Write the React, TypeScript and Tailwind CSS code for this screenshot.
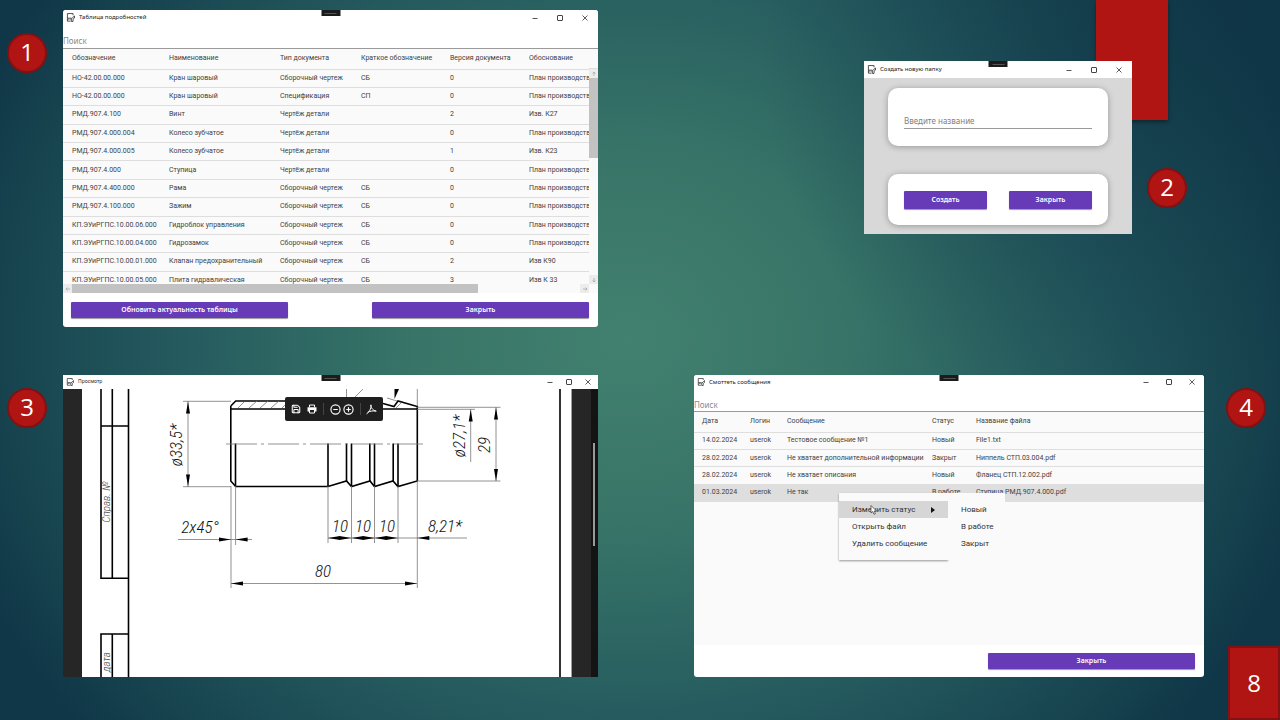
import type { ReactNode } from "react";
import { CircleMinus, CirclePlus, Save } from "lucide-react";

const details: string[][] = [
  ["НО-42.00.00.000", "Кран шаровый", "Сборочный чертеж", "СБ", "0", "План производств"],
  ["НО-42.00.00.000", "Кран шаровый", "Спецификация", "СП", "0", "План производств"],
  ["РМД.907.4.100", "Винт", "Чертёж детали", "", "2", "Изв. К27"],
  ["РМД.907.4.000.004", "Колесо зубчатое", "Чертёж детали", "", "0", "План производств"],
  ["РМД.907.4.000.005", "Колесо зубчатое", "Чертёж детали", "", "1", "Изв. К23"],
  ["РМД.907.4.000", "Ступица", "Чертёж детали", "", "0", "План производств"],
  ["РМД.907.4.400.000", "Рама", "Сборочный чертеж", "СБ", "0", "План производств"],
  ["РМД.907.4.100.000", "Зажим", "Сборочный чертеж", "СБ", "0", "План производств"],
  ["КП.ЭУиРГПС.10.00.06.000", "Гидроблок управления", "Сборочный чертеж", "СБ", "0", "План производств"],
  ["КП.ЭУиРГПС.10.00.04.000", "Гидрозамок", "Сборочный чертеж", "СБ", "0", "План производств"],
  ["КП.ЭУиРГПС.10.00.01.000", "Клапан предохранительный", "Сборочный чертеж", "СБ", "2", "Изв К90"],
  ["КП.ЭУиРГПС.10.00.05.000", "Плита гидравлическая", "Сборочный чертеж", "СБ", "3", "Изв К 33"],
];

const messages: string[][] = [
  ["14.02.2024", "userok", "Тестовое сообщение №1", "Новый", "File1.txt"],
  ["28.02.2024", "userok", "Не хватает дополнительной информации", "Закрыт", "Ниппель СТП.03.004.pdf"],
  ["28.02.2024", "userok", "Не хватает описания", "Новый", "Фланец СТП.12.002.pdf"],
  ["01.03.2024", "userok", "Не так", "В работе", "Ступица РМД.907.4.000.pdf"],
];

function AppIcon({ size }: { size: string }) {
  return (
    <svg className={`shrink-0 ${size}`} viewBox="0 0 16 16" fill="none" stroke="#333" strokeWidth="1.500" aria-hidden="true">
      <path d="M12.500 4V1H2.500v13.500H8" />
      <path d="M2.500 9H9M2.500 12H4M5 9v3M7.500 9v3" strokeWidth="1.200" />
      <path d="M9.500 15V9.500l2.500-1 3-3.500v4l-2.500 2V15z" />
    </svg>
  );
}

function TitleBar({ title, height, control, icon = "size-[9px]" }: { title: string; height: string; control: string; icon?: string }) {
  return (
    <header className={`relative flex items-center bg-white pr-px pl-[3px] ${height}`}>
      <AppIcon size={icon} />
      <h2 className="flex-1 pl-1 text-[#222]">{title}</h2>
      <span className="absolute top-0 left-1/2 flex h-1.5 w-[19px] -translate-x-1/2 items-center justify-center bg-[#1b1b1b]">
        <span className="h-px w-3 bg-[#555]" />
      </span>
      <button aria-label="Свернуть" className={`flex h-full items-center justify-center ${control}`}>
        <svg className="size-1.5" viewBox="0 0 6 6" stroke="#555"><path d="M.5 3.500h5" /></svg>
      </button>
      <button aria-label="Развернуть" className={`flex h-full items-center justify-center ${control}`}>
        <svg className="size-1.5" viewBox="0 0 6 6" fill="none" stroke="#444"><rect x=".5" y=".5" width="5" height="5" rx=".5" /></svg>
      </button>
      <button aria-label="Закрыть окно" className={`flex h-full items-center justify-center ${control}`}>
        <svg className="size-1.5" viewBox="0 0 6 6" stroke="#333" strokeWidth=".8"><path d="M.5.5l5 5M5.500.5l-5 5" /></svg>
      </button>
    </header>
  );
}

function Badge({ children, offset }: { children: ReactNode; offset: string }) {
  return (
    <span className={`flex size-10 shrink-0 items-center justify-center rounded-full border-2 border-[#821114] bg-[#b01513] pb-0.5 font-['Open_Sans'] text-2xl leading-none text-white ${offset}`}>
      {children}
    </span>
  );
}

function Action({ children, className = "" }: { children: ReactNode; className?: string }) {
  return (
    <button className={`rounded-[1px] bg-[#673ab7] text-center text-[7px] font-semibold text-white shadow-[0_1px_1px_rgba(0,0,0,0.4)] ${className}`}>
      {children}
    </button>
  );
}

function Arrow({ d }: { d: string }) {
  return (
    <span className="flex size-[9px] items-center justify-center bg-[#ececec]">
      <svg className="size-1.5" viewBox="0 0 6 6" fill="none" stroke="#a8a8a8" strokeWidth=".8"><path d={d} /></svg>
    </span>
  );
}

function DetailsWindow() {
  return (
    <section className="min-w-0 flex-1 overflow-hidden rounded-[3px] bg-white">
      <TitleBar title="Таблица подробностей" height="h-[15px] text-[6px]" control="w-[25px]" />
      <input aria-label="Поиск" placeholder="Поиск" className="mt-2 block h-4 w-full border-b border-[#9a9a9a] bg-white text-[8px] placeholder:text-[#8a8a8a]" />
      <div className="bg-[#fafafa]">
        <div className="flex h-[235px] overflow-hidden">
          <div className="min-w-0 flex-1 overflow-hidden">
            <table className="h-[241px] w-full table-fixed border-collapse text-left font-['Roboto'] text-[7px] leading-none whitespace-nowrap text-[#3f3f3f]">
              <colgroup>
                <col className="w-[97px]" /><col className="w-[111px]" /><col className="w-[81px]" />
                <col className="w-[89px]" /><col className="w-[79px]" /><col />
              </colgroup>
              <thead>
                <tr className="h-5 border-b border-[#dedede]">
                  {["Обозначение", "Наименование", "Тип документа", "Краткое обозначение", "Версия документа", "Обоснование"].map((h) => (
                    <th key={h} className="p-0 pl-[9px] font-normal">{h}</th>
                  ))}
                </tr>
              </thead>
              <tbody>
                {details.map((row, i) => (
                  <tr key={i} className="border-b border-[#dedede]">
                    {row.map((cell, j) => <td key={j} className="p-0 pl-[9px]">{cell}</td>)}
                  </tr>
                ))}
              </tbody>
            </table>
          </div>
          <div className="flex w-[9px] flex-col" aria-hidden="true">
            <div className="h-5 border-b border-[#dedede]" />
            <Arrow d="M3 5V1M1.500 2.500L3 1l1.500 1.500" />
            <div className="h-20 bg-[#c2c2c2]" />
            <div className="flex-1" />
            <Arrow d="M3 1v4M1.500 3.500L3 5l1.500-1.500" />
          </div>
        </div>
        <div className="flex h-[9px] pr-[9px]" aria-hidden="true">
          <Arrow d="M5 3H1M2.500 1.500L1 3l1.500 1.500" />
          <div className="w-[406px] bg-[#c2c2c2]" />
          <div className="flex-1" />
          <Arrow d="M1 3h4M3.500 1.500L5 3 3.500 4.500" />
        </div>
      </div>
      <footer className="flex justify-between pt-[9px] pr-[9px] pb-[9px] pl-2">
        <Action className="h-4 w-[217px]">Обновить актуальность таблицы</Action>
        <Action className="h-4 w-[217px]">Закрыть</Action>
      </footer>
    </section>
  );
}

function FolderWindow() {
  const card = "rounded-[10px] bg-white px-4 shadow-[0_1px_6px_rgba(0,0,0,0.3)]";
  return (
    <section className="min-w-0 flex-1 overflow-hidden bg-[#d8d8d8]">
      <TitleBar title="Создать новую папку" height="h-[17px] text-[6px]" control="w-[25px]" />
      <form className="flex flex-col gap-7 px-6 pt-[10px] pb-[9px]">
        <div className={`${card} pt-[25px] pb-[17px]`}>
          <input aria-label="Введите название" placeholder="Введите название" className="block h-4 w-full border-b border-[#9a9a9a] bg-white text-[8px] placeholder:text-[#808080]" />
        </div>
        <div className={`${card} flex justify-between pt-[17px] pb-4`}>
          <Action className="h-[18px] w-[83px]">Создать</Action>
          <Action className="h-[18px] w-[83px]">Закрыть</Action>
        </div>
      </form>
    </section>
  );
}

function Head({ x, y, angle }: { x: number; y: number; angle: number }) {
  return <path d="M0 0l12-2v4z" fill="#000" stroke="none" transform={`translate(${x} ${y}) rotate(${angle})`} />;
}

function Drawing() {
  return (
    <svg className="block h-auto min-w-0 flex-1 bg-white" viewBox="82 389 490 288" fill="none" role="img" aria-label="Чертёж ниппеля">
      <g stroke="#000" strokeWidth="1.600">
        <path d="M101 389V578.300H128.500M112.300 389V578M101 426H128.500M128.500 389V677M101 677V634H128.500M112.300 634V677M560 389V677" />
        <path d="M400 409H231M417.300 409H231M230.800 406V481L235.700 486.500H328L346.500 481 351.500 486.500 370 481 374.500 486.500 393 481 398 486.500 417.300 481V406.500L398 401 394 406.500 383 403.500M230.800 406L235.700 401H346" />
        <path d="M235.500 443.500V486.500M328 443.500V486.500M346.500 443.500V482M351.500 443.500V486.500M369.800 443.500V482M374.500 443.500V486.500M393.200 443.500V482M398 443.500V486.500" />
      </g>
      <g stroke="#777" strokeWidth=".8">
        <path d="M238 408l6-6M249 408l8-7M260 408l8-7M271 408l8-7M282 408l6-6M346.500 389V398M363 389l-8 8M387 398l10 3M396 408l5-5M417.300 389V406" />
        <path d="M226 444H423" strokeDasharray="31 4 3 4" />
        <path d="M183 401.300H231M183 486.700H231M188 401V487M417 407.300H500.500M417 409.300H475M417 481H500.500M496 407V481M470.700 409V462" />
        <path d="M231 486V588M235.600 486V545M178 539.500H252M328 486V543M351.500 486V543M374.500 486V543M398 486V543M417.300 481V588M328 538H467M231 583.500H417" />
        <path d="M571.600 389V677" />
      </g>
      <path d="M394.500 389H399L394.500 399z" fill="#000" />
      <Head x={188} y={401.5} angle={90} /><Head x={188} y={486.5} angle={-90} />
      <Head x={496} y={407.5} angle={90} /><Head x={496} y={481} angle={-90} />
      <Head x={470.7} y={409.5} angle={90} />
      <Head x={231} y={539.5} angle={180} /><Head x={235.6} y={539.5} angle={0} />
      <Head x={231} y={583.5} angle={0} /><Head x={417} y={583.5} angle={180} />
      {[328, 351.5, 374.5].map((x) => (
        <g key={x}><Head x={x} y={538} angle={0} /><Head x={x + 23.4} y={538} angle={180} /></g>
      ))}
      <Head x={417.3} y={538} angle={0} />
      <g fill="#111" textAnchor="middle" className="font-['Roboto_Condensed','Lato',sans-serif] text-[17px] font-light italic">
        <text x="200" y="533">2x45°</text>
        <text x="340" y="532">10</text><text x="363" y="532">10</text><text x="387" y="532">10</text>
        <text x="445" y="532">8,21*</text>
        <text x="323" y="577">80</text>
        <text transform="translate(182 445) rotate(-90)">ø33,5*</text>
        <text transform="translate(465 436) rotate(-90)">ø27,1*</text>
        <text transform="translate(490 445) rotate(-90)">29</text>
      </g>
      <g fill="#444" textAnchor="middle" className="font-['Roboto_Condensed','Lato',sans-serif] text-[11px] font-light italic">
        <text transform="translate(110 502) rotate(-90)">Справ. №</text>
        <text transform="translate(110 662) rotate(-90)">дата</text>
      </g>
    </svg>
  );
}

function PreviewWindow() {
  return (
    <section className="relative min-w-0 flex-1 overflow-hidden bg-[#262626]">
      <TitleBar title="Просмотр" height="h-[14px] text-[5px]" control="w-[19px]" icon="size-2" />
      <div className="flex">
        <div className="w-[19px]" />
        <Drawing />
        <div className="flex w-[26px] justify-end">
          <div className="w-[7px] bg-[#141414] pt-[54px]">
            <div className="ml-[2px] h-[103px] w-0.5 bg-[#9a9a9a]" />
          </div>
        </div>
      </div>
      <div className="absolute top-[22px] left-[222px] flex h-6 w-[98px] items-center rounded-[2px] bg-[#1f1f1f] px-1.5 text-white">
        <button aria-label="Сохранить"><Save className="size-[10px]" strokeWidth={2.5} /></button>
        <button aria-label="Печать" className="ml-1.5">
          <svg className="size-[10px]" viewBox="0 0 20 20" fill="none" stroke="#fff" strokeWidth="2">
            <path d="M5 6V2h10v4" />
            <path d="M1 6.500h18V15H1z" fill="#fff" stroke="none" />
            <path d="M5 11h10v7H5z" fill="#1f1f1f" />
          </svg>
        </button>
        <span className="mx-1.5 h-3 w-px bg-[#444]" />
        <button aria-label="Уменьшить"><CircleMinus className="size-[11px]" strokeWidth={2.5} /></button>
        <button aria-label="Увеличить" className="ml-0.5"><CirclePlus className="size-[11px]" strokeWidth={2.5} /></button>
        <span className="mx-1.5 h-3 w-px bg-[#444]" />
        <button aria-label="Acrobat">
          <svg className="size-[11px]" viewBox="0 0 20 20" fill="none" stroke="#fff" strokeWidth="1.800">
            <path d="M1 18C5 16 10 8 9 1.500 8 4 11 12 19 13M3 15c4-2 10-3 15-2" />
          </svg>
        </button>
      </div>
    </section>
  );
}

function MessagesWindow() {
  const item = "flex h-[17px] w-full items-center px-[13px] text-left";
  return (
    <section className="relative flex min-w-0 flex-1 flex-col rounded-[3px] bg-white">
      <TitleBar title="Смоттеть сообщения" height="h-[14px] rounded-t-[3px] text-[6px]" control="w-[23px]" icon="size-2" />
      <input aria-label="Поиск сообщений" placeholder="Поиск" className="mt-2 block h-[15px] w-full border-b border-[#9a9a9a] bg-white text-[8px] placeholder:text-[#8a8a8a]" />
      <div className="min-h-[233px] bg-[#fafafa]">
        <table className="h-[90px] w-full table-fixed border-collapse text-left font-['Roboto'] text-[7px] leading-none whitespace-nowrap text-[#3f3f3f]">
          <colgroup>
            <col className="w-[48px]" /><col className="w-[37px]" /><col className="w-[145px]" /><col className="w-[44px]" /><col />
          </colgroup>
          <thead>
            <tr className="h-5 border-b border-[#dedede]">
              {["Дата", "Логин", "Сообщение", "Статус", "Название файла"].map((h) => (
                <th key={h} className="p-0 pl-2 font-normal">{h}</th>
              ))}
            </tr>
          </thead>
          <tbody>
            {messages.map((row, i) => (
              <tr key={i} className="border-b border-[#dedede] last:bg-[#dedede]">
                {row.map((cell, j) => <td key={j} className="p-0 pl-2">{cell}</td>)}
              </tr>
            ))}
          </tbody>
        </table>
      </div>
      <footer className="flex justify-end py-2 pr-[9px]">
        <Action className="h-4 w-[207px]">Закрыть</Action>
      </footer>
      <div className="absolute top-[118px] left-[145px] flex items-start font-['Roboto'] text-[8px] leading-none whitespace-nowrap text-[#333]">
        <div className="w-[109px] bg-[#fafafa] py-2 shadow-[0_1px_2px_rgba(0,0,0,0.4)]">
          <button className={`${item} justify-between bg-[#d6d6d6]`}>
            Изменить статус
            <svg className="h-1.5 w-1" viewBox="0 0 4 6"><path d="M0 0l4 3-4 3z" fill="#111" /></svg>
          </button>
          <button className={item}>Открыть файл</button>
          <button className={item}>Удалить сообщение</button>
        </div>
        <div className="w-[57px] bg-[#fafafa] py-2">
          <button className={item}>Новый</button>
          <button className={item}>В работе</button>
          <button className={item}>Закрыт</button>
        </div>
        <svg className="absolute top-3 left-[31px] h-2.5 w-2" viewBox="0 0 8 10" aria-hidden="true">
          <path d="M1 .5v7.500l1.800-1.500 1.200 2.800 1.400-.6-1.200-2.700H6.500z" fill="#fff" stroke="#333" strokeWidth=".7" />
        </svg>
      </div>
    </section>
  );
}

export default function App() {
  return (
    <main className="relative min-h-screen overflow-hidden bg-[#103748] bg-[radial-gradient(circle_at_88%_8%,rgba(14,52,70,0.6)_0%,transparent_28%),radial-gradient(ellipse_55%_85%_at_49%_47%,#42806f_0%,#387568_30%,#24595e_65%,#17444f_88%,#103748_100%)] font-['Noto_Sans',sans-serif]">
      <div className="absolute top-0 right-28 h-[120px] w-[72px] bg-[#b01513] shadow-[0_2px_4px_rgba(0,0,0,0.4)]" />
      <div className="relative grid grid-cols-[598fr_682fr]">
        <div className="flex items-start gap-4 pt-[10px] pb-12 pl-[7px]">
          <Badge offset="mt-[23px]">1</Badge>
          <DetailsWindow />
        </div>
        <div className="flex items-start gap-[15px] pt-[61px] pr-[93px] pl-[266px]">
          <FolderWindow />
          <Badge offset="mt-[107px]">2</Badge>
        </div>
        <div className="flex items-start gap-4 pl-[7px]">
          <Badge offset="mt-[13px]">3</Badge>
          <PreviewWindow />
        </div>
        <div className="flex items-start gap-[22px] pr-[14px] pl-24">
          <MessagesWindow />
          <Badge offset="mt-[13px]">4</Badge>
        </div>
      </div>
      <div className="absolute right-0 bottom-0 flex h-[74px] w-[52px] items-center justify-center border-2 border-[#821114] bg-[#b01513] font-['Open_Sans'] text-2xl text-white">8</div>
    </main>
  );
}
